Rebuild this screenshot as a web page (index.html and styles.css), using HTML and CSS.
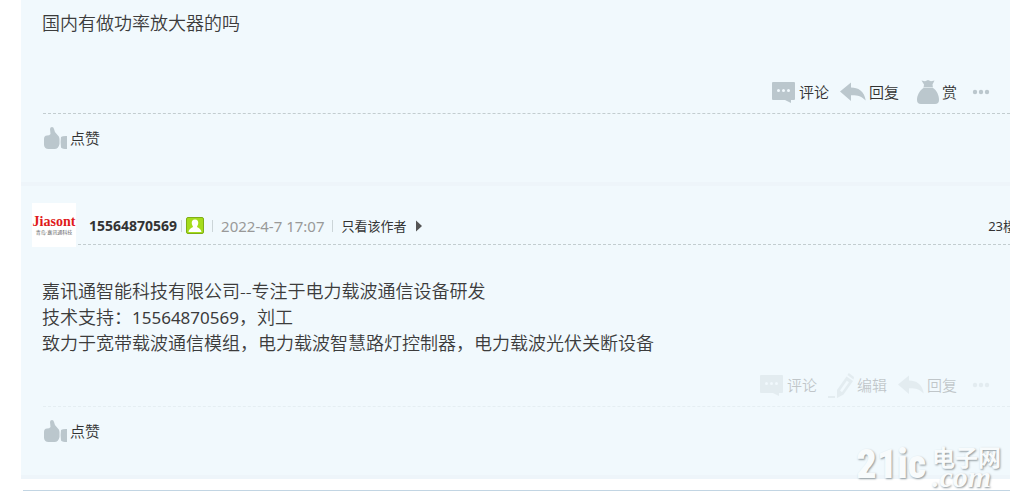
FILE: index.html
```html
<!DOCTYPE html>
<html lang="zh-CN">
<head>
  <meta charset="UTF-8">
  <meta name="viewport" content="width=device-width, initial-scale=1.0">
  <title>国内有做功率放大器的吗</title>
  <link rel="stylesheet" href="styles.css">
</head>
<body>
  <!-- shared icons -->
  <svg class="sprite" aria-hidden="true">
    <symbol id="comment" viewBox="0 0 24 22">
      <path fill="currentColor" fill-rule="evenodd" d="M1 1h21q1 0 1 1v16q0 1-1 1h-3v3l-6-3H1q-1 0-1-1V2q0-1 1-1zM5 9.500a1.500 1.500 0 1 0 3 0a1.500 1.500 0 1 0-3 0zM10 9.500a1.500 1.500 0 1 0 3 0a1.500 1.500 0 1 0-3 0zM15 9.500a1.500 1.500 0 1 0 3 0a1.500 1.500 0 1 0-3 0z"/>
    </symbol>
    <symbol id="reply" viewBox="0 0 26 20">
      <path fill="currentColor" d="M0 9.500L11 0.500v5C18 5.500 24.500 9 25.700 18.500C21.500 14 17 13 11 13.200V19z"/>
    </symbol>
    <symbol id="bag" viewBox="0 0 22 24">
      <path fill="currentColor" d="M4.500 0.500L8 1.300L11 0L14 1.300L17.500 0.500L15.500 4.500L16 8C20 10.500 22 15.500 22 20Q22 24 18 24H4Q0 24 0 20C0 15.500 2.500 10.500 6.500 8L7 4.500z"/>
      <path stroke="#f0f8fc" stroke-opacity=".6" d="M6.500 7.500h9.500"/>
    </symbol>
    <symbol id="pencil" viewBox="0 0 26 25">
      <path fill="currentColor" fill-rule="evenodd" d="M9 17L18.500 3.500L25 8L15.500 21.500L9 25zM12 17.500L18.800 7.700L21 9.200L14 19.200zM19.500 2L20.800 0L26 4L25.500 6.500zM0 23h7v2H0z"/>
    </symbol>
    <symbol id="dots" viewBox="0 0 18 6">
      <g fill="currentColor"><circle cx="3" cy="3" r="2.200"/><circle cx="9" cy="3" r="2.200"/><circle cx="15" cy="3" r="2.200"/></g>
    </symbol>
    <symbol id="thumb" viewBox="0 0 24 22">
      <path fill="currentColor" d="M7.500 7L7 2Q7.200 0 9 0Q10.600 0 11 2Q11.200 5 14.500 8Q16.500 9.500 16.500 12V17Q15.500 22 11.500 22H5.500Q1.500 22 1 18V12Q1 8.500 4 8.500Q6.500 8.500 7.500 7zM18 10Q19.500 8.800 24 9V22Q19.500 22 18 20.500Q17.200 15 18 10z"/>
    </symbol>
  </svg>

  <main class="thread">
    <article class="post first">
      <div class="message">国内有做功率放大器的吗</div>
      <div class="actions">
        <button class="act"><svg class="ico comment"><use href="#comment"/></svg>评论</button>
        <button class="act"><svg class="ico reply"><use href="#reply"/></svg>回复</button>
        <button class="act reward"><svg class="ico bag"><use href="#bag"/></svg>赏</button>
        <button class="act more" aria-label="更多"><svg class="ico dots"><use href="#dots"/></svg></button>
      </div>
      <div class="like">
        <button class="act"><svg class="ico thumb"><use href="#thumb"/></svg>点赞</button>
      </div>
    </article>

    <article class="post">
      <header class="post-head">
        <a class="avatar" href="#">
          <span class="brand">Jiasont</span>
          <span class="slogan">青岛·嘉讯通科技</span>
        </a>
        <div class="info">
          <a class="author" href="#">15564870569</a>
          <i class="bar"></i>
          <svg class="online" viewBox="0 0 18 17">
            <rect x="0.500" y="0.500" width="17" height="16" rx="1.500" fill="#a5dc1c" stroke="#7fae16"/>
            <path fill="#fff" d="M9 2.500c2.600 0 3.600 1.800 3.200 4.300c-.2 1.300-.8 2-1.200 2.700c.2 1.500 4 1.500 4.500 5.500h-13c.5-4 4.300-4 4.500-5.500c-.4-.7-1-1.400-1.200-2.700C5.400 4.300 6.400 2.500 9 2.500z"/>
          </svg>
          <i class="bar wide"></i>
          <time class="date">2022-4-7 17:07</time>
          <i class="bar wide"></i>
          <a class="only" href="#">只看该作者</a>
          <svg class="arrow" viewBox="0 0 6 12"><path fill="#555" d="M0 0.500L6 6L0 11.500z"/></svg>
          <a class="floor" href="#">23楼</a>
        </div>
      </header>
      <div class="message">嘉讯通智能科技有限公司--专注于电力载波通信设备研发<br>技术支持：<span class="phone">15564870569</span>，刘工<br>致力于宽带载波通信模组，电力载波智慧路灯控制器，电力载波光伏关断设备</div>
      <div class="actions faded">
        <button class="act"><svg class="ico comment"><use href="#comment"/></svg>评论</button>
        <button class="act edit"><svg class="ico pencil"><use href="#pencil"/></svg>编辑</button>
        <button class="act"><svg class="ico reply"><use href="#reply"/></svg>回复</button>
        <button class="act more" aria-label="更多"><svg class="ico dots"><use href="#dots"/></svg></button>
      </div>
      <div class="like">
        <button class="act"><svg class="ico thumb"><use href="#thumb"/></svg>点赞</button>
      </div>
    </article>
  </main>
  <div class="next"></div>

  <div class="watermark">
    <span class="wm-name">21ic</span>
    <span class="wm-side"><span class="wm-cn">电子网</span><span class="wm-com">.com</span></span>
  </div>
</body>
</html>
```

FILE: styles.css
```css
* {
  box-sizing: border-box;
}

body {
  margin: 0;
  min-height: 100vh;
  position: relative;
  overflow: hidden;
  background: #fff;
  color: #333;
  font-family: "Noto Sans", "Noto Sans CJK SC", sans-serif;
  font-size: 15px;
}

a {
  color: inherit;
  text-decoration: none;
}

.sprite {
  display: none;
}

.thread {
  margin-left: 21px;
}

.post {
  background: #f1f9fd;
  border-bottom: 4px solid #eef5fa;
  padding: 17px 0 31px;
}

.post.first {
  padding-top: 10px;
}

.message {
  margin-left: 21px;
  color: #3c3c3c;
  font-size: 18px;
  font-weight: 350;
  line-height: 26px;
}

.phone {
  font-size: 17px;
  font-weight: 400;
  line-height: 24px;
}

/* comment / reply row */
.actions {
  display: flex;
  justify-content: flex-end;
  align-items: center;
  gap: 11px;
  height: 36px;
  margin: 15px 0 0 22px;
  padding: 0 20px 7px 0;
  border-bottom: 1px dashed #c3cdd0;
}

.first .actions {
  margin-top: 42px;
}

.act {
  display: flex;
  align-items: center;
  gap: 3px;
  padding: 0;
  border: 0;
  background: none;
  color: #333;
  font-family: inherit;
  font-size: 15px;
  font-weight: 350;
  line-height: 24px;
  cursor: pointer;
}

.reward {
  margin-left: 7px;
}

.more {
  margin-left: 4px;
}

.actions.faded {
  border-color: #e5eef2;
}

.faded .act {
  opacity: 0.25;
}

.ico {
  color: #bbc7cd;
  flex: none;
}

.comment {
  width: 24px;
  height: 22px;
}

.reply {
  width: 26px;
  height: 20px;
}

.bag {
  width: 22px;
  height: 24px;
}

.pencil {
  width: 26px;
  height: 25px;
}

.dots {
  width: 18px;
  height: 6px;
}

.thumb {
  width: 24px;
  height: 22px;
}

.like {
  display: flex;
  height: 24px;
  margin: 12px 0 1px 22px;
}

/* author line */
.post-head {
  display: flex;
  align-items: flex-start;
  margin: 0 -6px 31px 11px;
}

.avatar {
  display: flex;
  flex-direction: column;
  align-items: center;
  width: 44px;
  height: 44px;
  padding-top: 12px;
  background: #fff;
}

.brand {
  color: #e01a1a;
  font-family: "Liberation Serif", serif;
  font-size: 14px;
  font-weight: bold;
  line-height: 14px;
}

.slogan {
  color: #666;
  font-size: 5px;
  line-height: 6px;
  white-space: nowrap;
}

.info {
  flex: 1;
  display: flex;
  align-items: center;
  height: 42px;
  margin-left: 2px;
  padding: 4px 0 0 11px;
  border-bottom: 1px dashed #c3cdd0;
  font-size: 13px;
  white-space: nowrap;
}

.author {
  font-size: 14px;
  font-weight: bold;
}

.bar {
  width: 1px;
  height: 12px;
  margin: 0 4px;
  background: #ccd5d8;
}

.bar.wide {
  margin: 0 8px;
}

.online {
  width: 18px;
  height: 17px;
}

.date {
  color: #999;
  font-size: 15px;
}

.arrow {
  width: 6px;
  height: 12px;
  margin-left: 9px;
}

.floor {
  margin-left: auto;
}

.next {
  height: 12px;
  margin-left: 23px;
  border-bottom: 1px solid #c2d5e3;
}

/* site mark in the corner */
.watermark {
  position: absolute;
  right: 9px;
  bottom: 4px;
  display: flex;
  align-items: center;
  gap: 6px;
  color: #f8fbfc;
  font-weight: bold;
  text-shadow: 1px 1px 2px #8d979c;
}

.wm-name {
  font-family: "Roboto Condensed", "Liberation Sans", sans-serif;
  font-size: 40px;
  font-weight: 900;
  line-height: 44px;
}

.wm-side {
  display: flex;
  flex-direction: column;
}

.wm-cn {
  font-family: "Noto Sans CJK SC", sans-serif;
  font-size: 23px;
  line-height: 24px;
}

.wm-com {
  font-family: "Liberation Serif", serif;
  font-size: 30px;
  font-style: italic;
  line-height: 18px;
}
```
